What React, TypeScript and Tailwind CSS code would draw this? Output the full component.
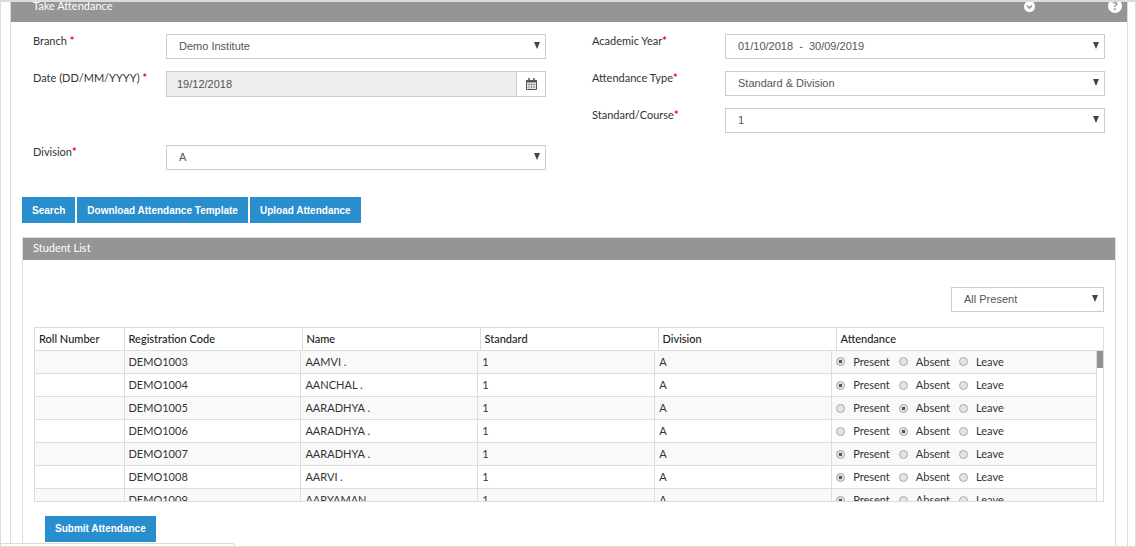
import { useId, useState } from "react";

type Status = "Present" | "Absent" | "Leave";

interface Student {
  code: string;
  name: string;
  status: Status;
}

const STATUSES: Status[] = ["Present", "Absent", "Leave"];

const initialStudents: Student[] = [
  { code: "DEMO1003", name: "AAMVI .", status: "Present" },
  { code: "DEMO1004", name: "AANCHAL .", status: "Present" },
  { code: "DEMO1005", name: "AARADHYA .", status: "Absent" },
  { code: "DEMO1006", name: "AARADHYA .", status: "Absent" },
  { code: "DEMO1007", name: "AARADHYA .", status: "Present" },
  { code: "DEMO1008", name: "AARVI .", status: "Present" },
  { code: "DEMO1009", name: "AARYAMAN .", status: "Present" },
];

export default function App() {
  const [students, setStudents] = useState(initialStudents);

  const setStatus = (code: string, status: Status) => {
    setStudents((list) => list.map((s) => (s.code === code ? { ...s, status } : s)));
  };

  return (
    <div className="relative flex h-screen flex-col overflow-hidden border border-t-2 border-[#dcdcdc] bg-white px-[9px] pr-[7px] font-['Lato',sans-serif] text-[11px] text-[#333]">
      <section className="flex flex-1 flex-col border-x border-[#dcdcdc]">
        <header className="flex h-5 shrink-0 items-start overflow-hidden bg-[#959595] pl-[22px] pr-[5px] text-white">
          <h1 className="flex-1 leading-2">Take Attendance</h1>
          <button type="button" aria-label="Collapse" className="mr-[73px] flex h-2 items-center">
            <svg width="11" height="11" viewBox="0 0 11 11" className="shrink-0">
              <circle cx="5.5" cy="5.5" r="5.5" fill="#fff" />
              <path d="M3 4.5l2.5 2.5 2.5-2.5" fill="none" stroke="#959595" strokeWidth="1.6" />
            </svg>
          </button>
          <button type="button" aria-label="Help" className="flex h-2 items-center">
            <span className="flex size-3.5 shrink-0 items-center justify-center rounded-full bg-white text-[12px] font-black leading-3.5 text-[#959595]">?</span>
          </button>
        </header>

        <form className="grid grid-cols-2 gap-x-[46px] px-[22px] pt-3" onSubmit={(e) => e.preventDefault()}>
          <div className="grid auto-rows-[37px]">
            <Field label="Branch " value="Demo Institute" />
            <DateField />
            <div />
            <Field label="Division" value="A" />
          </div>
          <div className="grid auto-rows-[37px]">
            <Field label="Academic Year" value={"01/10/2018 \u00a0-\u00a0 30/09/2019"} />
            <Field label="Attendance Type" value="Standard & Division" />
            <Field label="Standard/Course" value="1" />
          </div>
        </form>

        <div className="mt-[15px] flex gap-0.5 pl-[11px]">
          <Button>Search</Button>
          <Button>Download Attendance Template</Button>
          <Button>Upload Attendance</Button>
        </div>

        <section className="mx-[11px] mt-3.5 flex flex-1 flex-col border border-b-0 border-[#dcdcdc]">
          <h2 className="h-[22px] bg-[#959595] pl-2.5 leading-5 text-white">Student List</h2>
          <div className="flex justify-end pr-[11px] pt-[27px]">
            <div className="w-[153px]">
              <Select label="Mark all" value="All Present" />
            </div>
          </div>

          <div className="mx-[11px] mt-[15px] border border-[#dcdcdc]">
            <table className="w-full table-fixed border-collapse">
              <Columns />
              <thead>
                <tr className="h-[22px] border-b border-[#dcdcdc] text-left text-[#222]">
                  {["Roll Number", "Registration Code", "Name", "Standard", "Division", "Attendance"].map((h) => (
                    <th key={h} className="border-r border-[#dcdcdc] py-0 pl-1 font-medium leading-5 last:border-r-0">
                      {h}
                    </th>
                  ))}
                </tr>
              </thead>
            </table>
            <div className="flex h-[150px]">
              <div className="flex-1 overflow-y-auto [scrollbar-width:none]">
                <table className="w-full table-fixed border-collapse">
                  <Columns />
                  <tbody>
                    {students.map((s) => (
                      <tr key={s.code} className="h-[23px] border-b border-[#dcdcdc] leading-5 odd:bg-[#f9f9f9]">
                        <Cell />
                        <Cell>{s.code}</Cell>
                        <Cell>{s.name}</Cell>
                        <Cell>1</Cell>
                        <Cell>A</Cell>
                        <Cell>
                          <div className="flex h-5 items-center gap-[9px]">
                            {STATUSES.map((status) => (
                              <label key={status} className="flex items-center gap-2">
                                <input
                                  type="radio"
                                  name={s.code}
                                  checked={s.status === status}
                                  onChange={() => setStatus(s.code, status)}
                                  className="size-[9px] shrink-0 appearance-none rounded-full border border-[#aaa] bg-[#e4e4e4] checked:bg-[radial-gradient(circle,#555_0_2px,#e0e0e0_2px)]"
                                />
                                {status}
                              </label>
                            ))}
                          </div>
                        </Cell>
                      </tr>
                    ))}
                  </tbody>
                </table>
              </div>
              <div className="w-1.5">
                <div className="h-[17px] bg-[#929292]" />
              </div>
            </div>
          </div>

          <div className="mt-3.5 pl-[22px]">
            <Button>Submit Attendance</Button>
          </div>
        </section>
      </section>
      <div className="absolute bottom-0 left-0 h-[3px] w-[234px] rounded-tr border-r border-t border-[#dcdcdc] bg-white" />
    </div>
  );
}

function Columns() {
  return (
    <colgroup>
      <col className="w-[89px]" />
      <col className="w-1/6" />
      <col className="w-1/6" />
      <col className="w-1/6" />
      <col className="w-1/6" />
      <col />
    </colgroup>
  );
}

function Label({ htmlFor, text }: { htmlFor: string; text: string }) {
  return (
    <label htmlFor={htmlFor} className="w-[133px] shrink-0 whitespace-pre leading-3.5">
      {text}
      <span className="font-bold text-[#f00]">*</span>
    </label>
  );
}

function Field({ label, value }: { label: string; value: string }) {
  const id = useId();
  return (
    <div className="flex items-start">
      <Label htmlFor={id} text={label} />
      <div className="flex-1">
        <Select id={id} value={value} />
      </div>
    </div>
  );
}

function DateField() {
  const id = useId();
  return (
    <div className="flex items-start">
      <Label htmlFor={id} text="Date (DD/MM/YYYY) " />
      <div className="flex h-[26px] flex-1 border border-[#ccc]">
        <input
          id={id}
          readOnly
          value="19/12/2018"
          className="min-w-0 flex-1 bg-[#eee] pl-2.5 font-['Liberation_Sans',sans-serif] text-[11px] text-[#555] outline-none"
        />
        <button type="button" aria-label="Pick a date" className="flex w-[29px] items-center justify-center border-l border-[#ccc]">
          <svg width="11" height="12" viewBox="0 0 11 12" fill="none" stroke="#555">
            <path d="M.5 2.5h10v9H.5z" />
            <path d="M.5 3.5h10" strokeWidth="2" />
            <path d="M3 0v3M8 0v3" strokeWidth="1.5" />
            <path d="M3 4.5v7M5.5 4.5v7M8 4.5v7M.5 6.5h10M.5 9h10" strokeWidth=".5" />
          </svg>
        </button>
      </div>
    </div>
  );
}

function Select({ id, label, value }: { id?: string; label?: string; value: string }) {
  return (
    <div className="relative">
      <select
        id={id}
        aria-label={label}
        className="block h-[25px] w-full appearance-none border border-[#ccc] bg-white pl-3 font-['Liberation_Sans',sans-serif] text-[11px] text-[#555] outline-none"
      >
        <option>{value}</option>
      </select>
      <svg width="6" height="7" viewBox="0 0 6 7" className="pointer-events-none absolute right-1.5 top-2">
        <path d="M0 0h6L3 7z" fill="#444" />
      </svg>
    </div>
  );
}

function Button({ children }: { children: React.ReactNode }) {
  return (
    <button type="button" className="h-[26px] bg-[#288ecd] px-2.5 font-['Liberation_Sans',sans-serif] text-[10px] font-bold text-white">
      {children}
    </button>
  );
}

function Cell({ children }: { children?: React.ReactNode }) {
  return <td className="border-r border-[#dcdcdc] py-0 pl-1">{children}</td>;
}
